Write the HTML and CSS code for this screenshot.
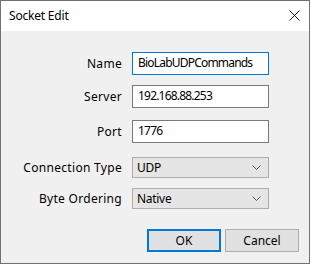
FILE: index.html
```html
<!DOCTYPE html>
<html lang="en">
<head>
    <meta charset="UTF-8">
    <title>Socket Edit</title>
    <link rel="stylesheet" href="styles.css">
</head>
<body>

    <div class="dialog">
        <!-- Title bar -->
        <div class="title-bar">
            <span class="title">Socket Edit</span>
            <span class="close-btn">
                <svg width="11" height="11" viewBox="0 0 11 11">
                    <path d="M0.5 0.5L10.5 10.5M10.5 0.5L0.5 10.5" stroke="#111" stroke-width="1"/>
                </svg>
            </span>
        </div>

        <!-- Form -->
        <div class="form">
            <div class="row row-name">
                <label class="label">Name</label>
                <div class="textbox focused">BioLabUDPCommands</div>
            </div>
            <div class="row row-server">
                <label class="label">Server</label>
                <div class="textbox">192.168.88.253</div>
            </div>
            <div class="row row-port">
                <label class="label">Port</label>
                <div class="textbox">1776</div>
            </div>
            <div class="row row-conn">
                <label class="label">Connection Type</label>
                <div class="combo">
                    <span>UDP</span>
                    <svg class="chevron" width="9" height="5" viewBox="0 0 9 5">
                        <path d="M0.5 0.5L4.5 4.5L8.5 0.5" stroke="#555" fill="none"/>
                    </svg>
                </div>
            </div>
            <div class="row row-order">
                <label class="label">Byte Ordering</label>
                <div class="combo">
                    <span>Native</span>
                    <svg class="chevron" width="9" height="5" viewBox="0 0 9 5">
                        <path d="M0.5 0.5L4.5 4.5L8.5 0.5" stroke="#555" fill="none"/>
                    </svg>
                </div>
            </div>

            <div class="buttons">
                <button class="btn btn-default">OK</button>
                <button class="btn">Cancel</button>
            </div>
        </div>
    </div>

</body>
</html>
```

FILE: styles.css
```css
body, html {
    margin: 0;
    padding: 0;
    background-color: #fff;
    font-family: "Noto Sans", "Open Sans", sans-serif;
    font-size: 12px;
    color: #000;
}

.dialog {
    box-sizing: border-box;
    width: 310px;
    height: 264px;
    border: 1px solid #717171;
    background-color: #f0f0f0;
    display: flex;
    flex-direction: column;
}

/* Title bar */
.title-bar {
    height: 30px;
    background-color: #fff;
    display: flex;
    align-items: center;
    justify-content: space-between;
    padding: 0 9px 0 8px;
}

.title {
    letter-spacing: -0.2px;
    padding-bottom: 1px;
}

.close-btn {
    display: flex;
    padding-bottom: 1px;
}

/* Form rows */
.form {
    display: flex;
    flex-direction: column;
}

.row {
    display: flex;
    align-items: center;
}

.row-name { margin-top: 21px; }
.row-server { margin-top: 10px; }
.row-port { margin-top: 12px; }
.row-conn { margin-top: 14px; }
.row-order { margin-top: 10px; }

.label {
    width: 121px;
    margin-right: 10px;
    text-align: right;
    letter-spacing: 0.3px;
}

.textbox {
    box-sizing: border-box;
    width: 137px;
    height: 23px;
    border: 1px solid #7a7a7a;
    background-color: #fff;
    padding: 0 5px;
    line-height: 20px;
    letter-spacing: -0.8px;
}

.textbox.focused {
    border-color: #0078d7;
}

.combo {
    box-sizing: border-box;
    width: 137px;
    height: 21px;
    border: 1px solid #adadad;
    background-color: #e5e5e5;
    padding: 0 7px 0 4px;
    display: flex;
    align-items: center;
    justify-content: space-between;
    letter-spacing: -0.3px;
}

/* Buttons */
.buttons {
    display: flex;
    justify-content: flex-end;
    gap: 4px;
    margin-top: 20px;
    padding-right: 10px;
}

.btn {
    box-sizing: border-box;
    width: 74px;
    height: 23px;
    border: 1px solid #adadad;
    background-color: #e1e1e1;
    font-family: "Noto Sans", "Open Sans", sans-serif;
    font-size: 12px;
    color: #000;
    padding: 0;
}

.btn-default {
    border: 2px solid #0078d7;
}
```
